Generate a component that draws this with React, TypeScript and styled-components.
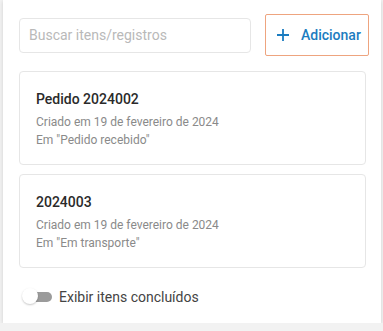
import styled, { createGlobalStyle } from "styled-components";

const GlobalStyle = createGlobalStyle`
  body {
    margin: 0;
    background: #f2f2f2;
    font-family: Roboto, "Noto Sans", sans-serif;
  }
`;

const Panel = styled.div`
  margin-left: 3px;
  width: 378px;
  height: 323px;
  box-sizing: border-box;
  background: #fff;
  box-shadow: 0 1px 4px rgba(0, 0, 0, 0.14);
  padding: 14px 15px 0 16px;
  display: flex;
  flex-direction: column;
`;

const Toolbar = styled.div`
  display: flex;
  align-items: center;
  gap: 14px;
  margin-right: -3px;
`;

const Search = styled.input`
  flex: 1;
  height: 35px;
  box-sizing: border-box;
  border: 1px solid #e6e6e6;
  border-radius: 4px;
  padding: 0 9px;
  font-family: Roboto, sans-serif;
  font-size: 14px;
  color: #333;
  outline: none;

  &::placeholder {
    color: #b9b9b9;
  }
`;

const AddButton = styled.button`
  width: 104px;
  height: 42px;
  box-sizing: border-box;
  border: 1.5px solid #eea47f;
  border-radius: 2px;
  background: #fff;
  color: #1b7cc0;
  font-family: Roboto, sans-serif;
  font-size: 14px;
  font-weight: 500;
  display: flex;
  align-items: center;
  gap: 11px;
  padding: 0 0 0 10px;
  cursor: pointer;
`;

const List = styled.div`
  display: flex;
  flex-direction: column;
  gap: 9px;
  margin-top: 15px;
`;

const Card = styled.div`
  height: 94px;
  box-sizing: border-box;
  border: 1px solid #e6e6e6;
  border-radius: 4px;
  padding: 18px 16px 0;
`;

const Title = styled.div`
  font-size: 14px;
  font-weight: 500;
  color: #2a2a2a;
  line-height: 18px;
  margin-bottom: 5px;
`;

const Meta = styled.div`
  font-size: 12px;
  color: #8a8a8a;
  line-height: 18px;
`;

const ToggleRow = styled.label`
  display: flex;
  align-items: center;
  margin-top: 20px;
  margin-left: 3px;
  gap: 7px;
  font-size: 14px;
  color: #444;
`;

const Switch = styled.span`
  position: relative;
  width: 30px;
  height: 18px;
  display: inline-block;
`;

const Track = styled.span`
  position: absolute;
  left: 3px;
  right: 0;
  top: 4px;
  height: 10px;
  border-radius: 5px;
  background: #9b9b9b;
`;

const Thumb = styled.span`
  position: absolute;
  left: 0;
  top: 0;
  width: 16px;
  height: 16px;
  border-radius: 50%;
  background: #fff;
  box-shadow: 0 1px 2px rgba(0, 0, 0, 0.22);
`;

const items = [
  { title: "Pedido 2024002", status: "Pedido recebido" },
  { title: "2024003", status: "Em transporte" },
];

export default function App() {
  return (
    <>
      <GlobalStyle />
      <Panel>
        <Toolbar>
          <Search placeholder="Buscar itens/registros" />
          <AddButton>
            <svg width="14" height="14" viewBox="0 0 14 14">
              <path d="M7 1v12M1 7h12" stroke="#1b7cc0" strokeWidth="1.8" />
            </svg>
            Adicionar
          </AddButton>
        </Toolbar>
        <List>
          {items.map((it) => (
            <Card key={it.title}>
              <Title>{it.title}</Title>
              <Meta>Criado em 19 de fevereiro de 2024</Meta>
              <Meta>Em "{it.status}"</Meta>
            </Card>
          ))}
        </List>
        <ToggleRow>
          <Switch>
            <Track />
            <Thumb />
          </Switch>
          Exibir itens concluídos
        </ToggleRow>
      </Panel>
    </>
  );
}
